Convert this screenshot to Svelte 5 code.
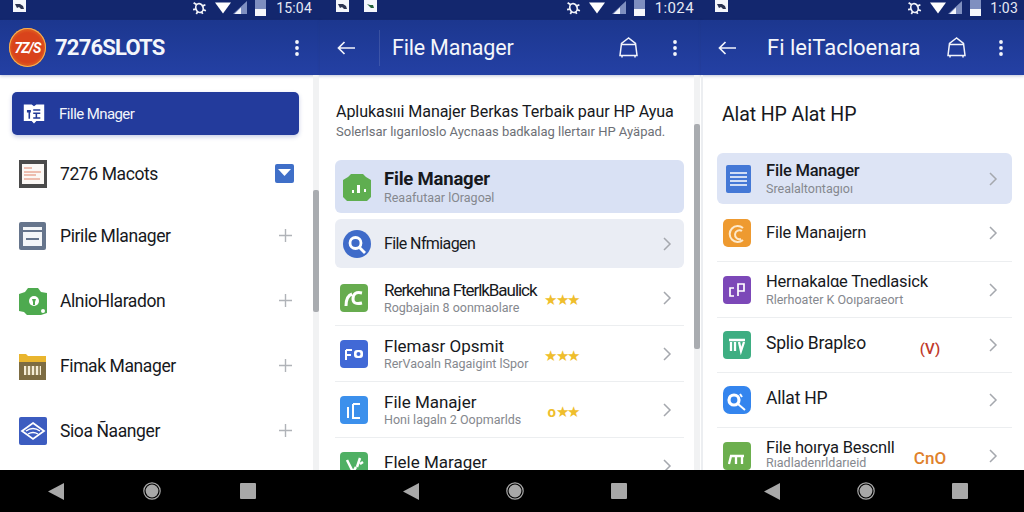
<script>
  const navItems = [
    { icon: 'book', label: 'FiIle Mnager', active: true },
    { icon: 'doc', label: '7276 Macots', mark: 'check' },
    { icon: 'window', label: 'Pirile Mlanager', mark: 'plus' },
    { icon: 'lock', label: 'AlnioHlaradon', mark: 'plus' },
    { icon: 'folder', label: 'Fimak Manager', mark: 'plus' },
    { icon: 'diamond', label: 'Sioa Ñaanger', mark: 'plus' }
  ];

  const middleRows = [
    { icon: 'leaf', title: 'Rerkehına FterlkBaulick', sub: 'Rogbajain 8 oonmaolare', stars: '★★★', tight: true },
    { icon: 'fb', title: 'Flemasr Opsmit', sub: 'RerVaoaln Ragaigint lSpor', stars: '★★★' },
    { icon: 'ic', title: 'File Manajer', sub: 'Honi lagaln 2 Oopmarlds', stars: '★★', ring: true },
    { icon: 'sprout', title: 'Flele Marager', sub: '', lifted: true }
  ];

  const rightRows = [
    { icon: 'purple', title: 'Hernakalαe Tnedlasick', sub: 'Rlerhoater K Ooıparaeort' },
    { icon: 'teal', title: 'Splio Braplεo', badge: '(V)', badgeClass: 'red', tall: true },
    { icon: 'search', title: 'Allat HP', tall: true },
    { icon: 'grass', title: 'File hoırya Bescnll', sub: 'Rıadladenrldarıeid', badge: 'CnO', badgeClass: 'orange', last: true }
  ];
</script>

{#snippet statusBar(cls, notes, time)}
  <div class="status {cls}">
    {#each notes as n}
      <span class="note">
        <svg viewBox="0 0 13 13" width="13" height="13">
          <rect width="13" height="13" fill="#f4f6fb" />
          <path d={n === 'green' ? 'M3 5l3 1 3 0 1 3H7L5 7z' : 'M2 5h5l3 2 1 3H8L6 8 4 9z'} fill={n === 'green' ? '#23603a' : '#2b3350'} />
        </svg>
      </span>
    {/each}
    <div class="status-right">
      <svg class="bug" viewBox="0 0 14 14" width="15" height="15" fill="none" stroke="#f2f4fa" stroke-width="1.6">
        <ellipse cx="7" cy="7.5" rx="3.4" ry="4.2" transform="rotate(-18 7 7.5)" />
        <path d="M1.5 2.5l3 2M12.5 4.500l-2.500 1M1 9l2.500-.5M13 10l-2.800-1M4 13l1.300-2M10 13l-1-2" />
      </svg>
      <svg class="wifi" viewBox="0 0 16 12" width="16" height="12"><path d="M0 .5h16L8 11.500z" fill="#fff" /></svg>
      <svg class="signal" viewBox="0 0 14 13" width="14" height="13">
        <path d="M14 0v13H0z" fill="#7f8fc0" />
        <path d="M8 6.500V13H1.500z" fill="#f4f6fb" />
      </svg>
      <span class="battery"><span></span></span>
      <span class="time">{time}</span>
    </div>
  </div>
{/snippet}

{#snippet dots()}
  <svg class="dots" viewBox="0 0 6 18" width="6" height="18" fill="#f4f6fb">
    <circle cx="3" cy="3" r="1.900" /><circle cx="3" cy="9" r="1.900" /><circle cx="3" cy="15" r="1.900" />
  </svg>
{/snippet}

{#snippet back()}
  <svg class="back" viewBox="0 0 18 14" width="18" height="14" fill="none" stroke="#f2f4fb" stroke-width="1.700">
    <path d="M18 7H1.500M7.500 1L1.500 7l6 6" />
  </svg>
{/snippet}

{#snippet bag()}
  <svg class="bag" viewBox="0 0 19 21" width="19" height="21" fill="none" stroke="#f2f4fb" stroke-width="1.500">
    <path d="M9.500 1L2.500 6.500 1 18.500h17L16.500 6.500zM2.500 7.500h14M3 18.500v2M16 18.500v2" />
  </svg>
{/snippet}

{#snippet navBar(cls)}
  <div class="nav {cls}">
    <svg viewBox="0 0 16 17" width="16" height="17"><path d="M16 0v17L0 8.500z" fill="#a8a8a8" /></svg>
    <svg viewBox="0 0 18 18" width="18" height="18"><circle cx="9" cy="9" r="8.200" fill="none" stroke="#a8a8a8" stroke-width="1.200" /><circle cx="9" cy="9" r="6.400" fill="#a8a8a8" /></svg>
    <svg viewBox="0 0 16 16" width="16" height="16"><rect width="16" height="16" rx="1" fill="#a8a8a8" /></svg>
  </div>
{/snippet}

{#snippet chevron()}
  <svg class="chevron" viewBox="0 0 9 14" width="9" height="14" fill="none" stroke="#a5a8ae" stroke-width="1.500">
    <path d="M1 1l6 6-6 6" />
  </svg>
{/snippet}

{#snippet icon(name)}
  <svg class="icon" viewBox="0 0 28 28" width="28" height="28">
    {#if name === 'book'}
      <path d="M1 2h10l3 2 3-2h10v21H17l-3 3-3-3H1z" fill="#fff" />
      <path d="M5 9h5v3H5zM7 12h2v8H7zM13 8h9v2h-9zM13 12h9v2h-9zM16 14h2v6h-2zM13 18h9v2h-9z" fill="#223a96" />
    {:else if name === 'doc'}
      <rect width="28" height="28" fill="#4a4a4a" />
      <rect x="3" y="4" width="22" height="20" fill="#fbf8f5" />
      <path d="M5 8h8M5 12h17M5 15h12M5 19h16" stroke="#e0846a" stroke-width="1" />
    {:else if name === 'window'}
      <rect width="27" height="28" rx="2" fill="#66758c" />
      <rect x="4" y="5" width="19" height="19" fill="#f4f6f8" />
      <path d="M4 9h19M7 17h13" stroke="#66758c" stroke-width="2" />
    {:else if name === 'lock'}
      <path d="M9 1h10l3 4 6 1v20l-6 2H8l-3-3-5-1V7l6-2z" fill="#4eaa4f" />
      <circle cx="15" cy="14" r="5" fill="#fff" />
      <path d="M13 12h4l-1 3v3h-2v-3z" fill="#4eaa4f" />
      <circle cx="24" cy="24" r="2" fill="#fff" />
    {:else if name === 'folder'}
      <path d="M0 2h7l2 2h18v6H0z" fill="#e9b52e" />
      <rect y="10" width="27" height="18" fill="#7d6c42" />
      <path d="M5 14h17v9H5z" fill="#f4ecd5" />
      <path d="M8 14v9M12 14v9M16 14v9M20 14v9" stroke="#7d6c42" stroke-width="1.500" />
    {:else if name === 'diamond'}
      <rect width="28" height="28" rx="2" fill="#3c5cc0" />
      <path d="M14 6l11 8-11 8L3 14z" fill="none" stroke="#fff" stroke-width="1.800" />
      <path d="M7 14q7-5 14 0M9 17q5-3 10 0" fill="none" stroke="#fff" stroke-width="1.400" />
    {:else if name === 'shield'}
      <path d="M8 1h12l3 3 5 3v17l-4 4H4l-4-4V7l5-3z" fill="#5fae50" />
      <path d="M9 17h2v3H9zM14 12h3v8h-3zM21 16h2v3h-2z" fill="#fff" />
    {:else if name === 'lens'}
      <circle cx="14" cy="14" r="14" fill="#3f6bc9" />
      <circle cx="12.500" cy="13" r="5.500" fill="none" stroke="#fff" stroke-width="2.800" />
      <path d="M16 17l6 6" stroke="#fff" stroke-width="2.800" />
    {:else if name === 'leaf'}
      <rect width="28" height="28" rx="4" fill="#67ac4f" />
      <path d="M6 22q0-10 6-12M22 9q-9-2-9 6 0 6 9 4" fill="none" stroke="#fff" stroke-width="3" />
    {:else if name === 'fb'}
      <rect width="28" height="28" rx="4" fill="#4169d6" />
      <path d="M6 10h6M6 10v10M6 15h5" fill="none" stroke="#fff" stroke-width="2" />
      <rect x="14" y="10" width="9" height="8" rx="3" fill="#fff" />
      <circle cx="18.500" cy="14" r="2" fill="#4169d6" />
    {:else if name === 'ic'}
      <rect width="28" height="28" rx="4" fill="#3c90ec" />
      <path d="M8 11v11M13 8v14h7M13 8h7" fill="none" stroke="#fff" stroke-width="2" />
    {:else if name === 'sprout'}
      <rect width="28" height="28" rx="4" fill="#4fb064" />
      <path d="M7 8l6 12 3-5M20 6l-3 9M20 12l3-2" fill="none" stroke="#fff" stroke-width="2.500" />
    {:else if name === 'lines'}
      <rect width="25" height="28" rx="2" x="1" fill="#4478d6" />
      <path d="M5 8h17M5 12h17M5 16h17M5 20h17" stroke="#fff" stroke-width="1.500" />
    {:else if name === 'ear'}
      <rect width="28" height="28" rx="5" fill="#ee9a30" />
      <path d="M20 9a8 8 0 1 0 0 12M19 12a4.500 4.500 0 1 0-1 8" fill="none" stroke="#fde9cb" stroke-width="2" />
    {:else if name === 'purple'}
      <rect width="28" height="28" rx="4" fill="#7c48b8" />
      <path d="M11 12H7v8h4M15 20V8h6v7h-6" fill="none" stroke="#fff" stroke-width="1.700" />
    {:else if name === 'teal'}
      <rect width="28" height="28" rx="4" fill="#3eae82" />
      <path d="M6 9h16M8 11v9M12 11v9M16 11l2 9 3-9" fill="none" stroke="#fff" stroke-width="2.300" />
    {:else if name === 'search'}
      <rect width="28" height="28" rx="7" fill="#3485ee" />
      <circle cx="11" cy="14" r="5" fill="none" stroke="#fff" stroke-width="3.200" />
      <path d="M15 18l7 6M17 8l2 3" stroke="#fff" stroke-width="2" />
    {:else if name === 'grass'}
      <rect width="28" height="28" rx="4" fill="#6caf4e" />
      <path d="M7 14h14M8 14l-2 8M13 14v8M19 14v8" fill="none" stroke="#fff" stroke-width="2.300" />
    {/if}
  </svg>
{/snippet}

<div class="phones">
  <section class="screen first">
    {@render statusBar('s1', ['dark'], '15:04')}
    <header class="appbar a1">
      <div class="logo"><span>7Z/S</span></div>
      <h1 class="brand">7276SLOTS</h1>
      {@render dots()}
    </header>
    <div class="body b1">
      {#each navItems as item}
        <div class="nav-row" class:active={item.active} class:checked={item.mark === 'check'}>
          {@render icon(item.icon)}
          <span class="nav-label">{item.label}</span>
          {#if item.mark === 'plus'}
            <svg class="plus" viewBox="0 0 13 13" width="13" height="13"><path d="M6.500 0v13M0 6.500h13" stroke="#b0b3b8" stroke-width="1.400" /></svg>
          {:else if item.mark === 'check'}
            <svg class="check" viewBox="0 0 19 19" width="19" height="19">
              <rect width="19" height="19" rx="2" fill="#3f6fc8" />
              <path d="M3 5h13l-6.500 7z" fill="#fff" />
            </svg>
          {/if}
        </div>
      {/each}
      <div class="scroll s-a"><span></span></div>
    </div>
    {@render navBar('n1')}
  </section>

  <section class="screen second">
    {@render statusBar('s2', ['dark', 'green'], '1:024')}
    <header class="appbar a2">
      {@render back()}
      <span class="divider"></span>
      <h1 class="title">File Manager</h1>
      {@render bag()}
      {@render dots()}
    </header>
    <div class="body b2">
      <h2 class="lead">Aplukasııi Manajer Berkas Terbaik paur HP Ayua</h2>
      <p class="lead-sub">Solerlsar lıgarıloslo Aycnaas badkalag llertaır HP Ayäpad.</p>
      <div class="card large">
        {@render icon('shield')}
        <div class="texts">
          <div class="big">File Manager</div>
          <div class="sub">Reaafutaar lOragoəl</div>
        </div>
      </div>
      <div class="card muted">
        {@render icon('lens')}
        <div class="texts"><div class="name squeezed">File Nfmiagen</div></div>
        {@render chevron()}
      </div>
      {#each middleRows as row, i}
        <div class="row" class:top-row={i === 0} class:lifted={row.lifted}>
          {@render icon(row.icon)}
          <div class="texts">
            <div class="name" class:tight={row.tight}>{row.title}</div>
            {#if row.sub}<div class="sub">{row.sub}</div>{/if}
          </div>
          {#if row.stars}
            <span class="stars">{#if row.ring}<i>o</i>{/if}{row.stars}</span>
          {/if}
          {@render chevron()}
        </div>
      {/each}
      <div class="scroll s-b"><span></span></div>
    </div>
    {@render navBar('n2')}
  </section>

  <section class="screen third">
    {@render statusBar('s3', ['dark'], '1:03')}
    <header class="appbar a3">
      {@render back()}
      <h1 class="title garbled">Fi leiTacloenara</h1>
      {@render bag()}
      {@render dots()}
    </header>
    <div class="body b3">
      <h2 class="alat">Alat HP Alat HP</h2>
      <div class="card plain">
        {@render icon('lines')}
        <div class="texts">
          <div class="name strong">File Manager</div>
          <div class="sub">Srealaltontagıoı</div>
        </div>
        {@render chevron()}
      </div>
      <div class="row first-row">
        {@render icon('ear')}
        <div class="texts"><div class="name">File Manaıjern</div></div>
        {@render chevron()}
      </div>
      {#each rightRows as row}
        <div class="row" class:tall={row.tall} class:last={row.last}>
          {@render icon(row.icon)}
          <div class="texts">
            <div class="name">{row.title}</div>
            {#if row.sub}<div class="sub">{row.sub}</div>{/if}
          </div>
          {#if row.badge}<span class="badge {row.badgeClass}">{row.badge}</span>{/if}
          {@render chevron()}
        </div>
      {/each}
    </div>
    {@render navBar('n3')}
  </section>
</div>

<style>
  :global(body) {
    margin: 0;
    background: #fff;
  }

  .phones {
    display: flex;
    width: 1024px;
    height: 512px;
    overflow: hidden;
    font-family: Roboto, "Liberation Sans", sans-serif;
    color: #17191d;
  }

  .screen {
    display: flex;
    flex-direction: column;
    height: 512px;
    flex: none;
    background: #fff;
  }

  .first { width: 320px; }
  .second { width: 381px; }
  .third { width: 323px; }

  /* status bar */
  .status {
    display: flex;
    align-items: center;
    height: 20px;
    flex: none;
    margin-top: -2px;
    padding-top: 2px;
    background: #13276e;
    box-sizing: content-box;
  }

  .s1 { padding-left: 13px; }
  .s2 { padding-left: 16px; }
  .s3 { padding-left: 14px; }
  .s2 .note + .note { margin-left: 15px; }

  .note { display: flex; margin-top: -9px; }

  .status-right {
    display: flex;
    align-items: center;
    margin-left: auto;
    color: #e6e9f4;
    font-size: 14px;
    margin-top: -5px;
  }

  .s1 .status-right { padding-right: 8px; }
  .s2 .status-right { padding-right: 7px; }
  .s3 .status-right { padding-right: 6px; }

  .wifi { margin-left: 8px; }
  .signal { margin-left: 2px; }
  .s2 .signal { margin-left: 7px; }

  .battery {
    display: block;
    width: 11px;
    height: 16px;
    margin-left: 8px;
    background: #7f8fc0;
    position: relative;
  }

  .battery span {
    position: absolute;
    left: 0;
    right: 0;
    bottom: 0;
    height: 7px;
    background: #f6f7fb;
  }

  .time { margin-left: 10px; letter-spacing: 0.2px; }
  .s2 .time { font-size: 15px; letter-spacing: 0.4px; }
  .s3 .time { margin-left: 9px; }

  /* app bar */
  .appbar {
    display: flex;
    align-items: center;
    height: 55px;
    flex: none;
    background: linear-gradient(180deg, #1c378f, #2440a4);
    color: #f4f6fb;
    box-shadow: 0 1px 3px rgba(40, 60, 130, 0.3);
    position: relative;
  }

  .a1 { padding: 0 20px 0 9px; }
  .a2 { padding: 0 23px 0 17px; }
  .a3 { padding: 0 20px 0 17px; }

  .logo {
    display: flex;
    align-items: center;
    justify-content: center;
    width: 37px;
    height: 39px;
    border-radius: 50%;
    background: radial-gradient(circle at 50% 50%, #d9431b 55%, #f09a2b 100%);
    box-shadow: 0 0 0 1px #f2b354 inset;
  }

  .logo span {
    font-size: 14px;
    font-weight: 700;
    font-style: italic;
    color: #fff;
    letter-spacing: -0.8px;
  }

  .brand {
    margin: 0 auto 0 9px;
    font-size: 22px;
    font-weight: 700;
    letter-spacing: -0.8px;
  }

  .divider {
    width: 1px;
    height: 36px;
    margin-left: 24px;
    background: rgba(255, 255, 255, 0.12);
  }

  .title {
    margin: 0 auto 0 12px;
    font-size: 21.500px;
    font-weight: 400;
    letter-spacing: -0.2px;
  }

  .garbled { margin-left: 31px; font-size: 22px; letter-spacing: 0; }

  .a2 .dots { margin-left: 34px; }
  .a3 .dots { margin-left: 32px; }

  /* bodies */
  .body {
    position: relative;
    flex: 1;
    min-height: 0;
    overflow: hidden;
  }

  .b1 { padding: 17px 21px 0 12px; }
  .b2 { padding: 27px 17px 0 15px; }
  .b3 { padding: 0 12px 0 14px; border-left: 2px solid #eceef1; box-sizing: border-box; }

  /* left drawer */
  .nav-row {
    display: flex;
    align-items: center;
    height: 65px;
    padding: 0 5px 0 7px;
  }

  .nav-row .icon { flex: none; }
  .nav-row.checked { margin-bottom: -3px; }
  .plus { margin-right: 2px; }

  .nav-row.active {
    height: 43px;
    margin-bottom: 6px;
    padding: 0 0 0 11px;
    border-radius: 5px;
    background: #233b9c;
    color: #f3f5fb;
    box-shadow: 0 2px 4px rgba(35, 59, 156, 0.25);
  }

  .nav-row.active .icon { width: 22px; height: 22px; }
  .nav-row.active .nav-label { font-size: 15px; margin-left: 14px; letter-spacing: -0.6px; }

  .nav-label {
    margin: 0 auto 0 13px;
    font-size: 17.500px;
    letter-spacing: -0.4px;
  }

  .scroll {
    position: absolute;
    top: 0;
    bottom: 0;
    width: 6px;
    background: #f1f2f3;
  }

  .scroll span {
    position: absolute;
    left: 0;
    width: 6px;
    background: #a9acb0;
    border-radius: 2px;
  }

  .s-a { right: 1px; }
  .s-a span { top: 115px; height: 122px; }
  .s-b { right: 1px; }
  .s-b span { top: 49px; height: 225px; }

  /* middle */
  .lead {
    margin: 0 0 0 1px;
    font-size: 16.100px;
    font-weight: 400;
    line-height: 20px;
    letter-spacing: -0.1px;
    white-space: nowrap;
  }

  .lead-sub {
    margin: 1px 0 0 1px;
    font-size: 13px;
    line-height: 18px;
    color: #6d7076;
    white-space: nowrap;
  }

  .card {
    display: flex;
    align-items: center;
    border-radius: 6px;
    padding: 0 12px 0 8px;
  }

  .card .icon, .row .icon { flex: none; }

  .large {
    height: 53px;
    margin-top: 19px;
    background: #d9e1f4;
  }

  .muted {
    height: 49px;
    margin-top: 6px;
    background: #eaedf4;
  }

  .texts {
    flex: 1;
    min-width: 0;
    margin-left: 16px;
    white-space: nowrap;
  }

  .card .texts { margin-left: 13px; }
  .b3 .texts { margin-left: 15px; }
  .b3 .plain .texts { margin-left: 13px; }

  .big {
    font-size: 18.500px;
    font-weight: 700;
    line-height: 22px;
    letter-spacing: -0.2px;
  }

  .name {
    font-size: 16.500px;
    line-height: 20px;
    letter-spacing: -0.2px;
  }

  .b2 .row .name { font-size: 17px; letter-spacing: 0; }
  .b2 .row .name.tight { letter-spacing: -1.050px; }
  .squeezed { font-size: 16px; letter-spacing: -0.6px; }

  .strong { font-weight: 500; }

  .sub {
    font-size: 12.500px;
    line-height: 16px;
    color: #85888e;
  }

  .row {
    display: flex;
    align-items: center;
    height: 56px;
    padding: 0 12px 0 5px;
    border-bottom: 1px solid #eceef0;
    box-sizing: border-box;
  }

  .top-row { margin-top: 2px; }
  .lifted .texts { padding-bottom: 8px; }
  .b2 .lifted .name { line-height: 18px; }

  .chevron { flex: none; }

  .stars {
    width: 40px;
    margin-right: 84px;
    margin-left: -84px;
    padding-top: 4px;
    color: #efbe2d;
    font-size: 15px;
    letter-spacing: -1.300px;
    white-space: nowrap;
    text-align: right;
  }

  .stars i {
    font-style: normal;
    font-weight: 700;
    margin-right: 1px;
  }

  /* right */
  .alat {
    margin: 0;
    padding: 27px 0 25px 5px;
    font-size: 19.500px;
    font-weight: 400;
    line-height: 26px;
    letter-spacing: -0.1px;
  }

  .plain {
    height: 51px;
    background: #dde4f5;
    padding: 0 14px 0 8px;
  }

  .b3 .row { padding: 0 14px 0 6px; }
  .first-row { height: 58px; }
  .b3 .row.tall { height: 55px; }
  .tall .name { font-size: 17.500px; padding-bottom: 4px; }
  .last .texts { padding-bottom: 3px; }
  .last .sub { line-height: 12px; }
  .last .name { line-height: 18px; }

  .badge {
    width: 40px;
    margin-left: -79px;
    margin-right: 39px;
    font-size: 15px;
    font-weight: 500;
    text-align: center;
    padding-top: 8px;
  }

  .red { color: #c0392b; }
  .orange { color: #e0822c; font-size: 17px; padding-top: 4px; }

  /* bottom nav */
  .nav {
    display: flex;
    align-items: center;
    height: 42px;
    flex: none;
    background: #000;
  }

  .n1 { padding-left: 48px; gap: 79px; }
  .n2 { padding-left: 83px; gap: 87px; }
  .n3 { padding-left: 63px; gap: 77px; }
</style>
